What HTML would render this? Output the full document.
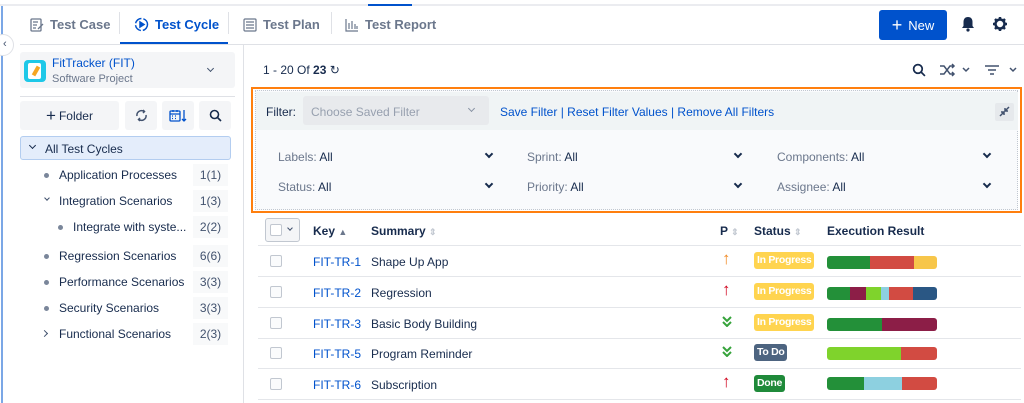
<!DOCTYPE html>
<html><head><meta charset="utf-8"><style>
*{box-sizing:border-box;margin:0;padding:0}
body{width:1024px;height:403px;overflow:hidden;background:#fff;font-family:"Liberation Sans",sans-serif;font-size:12px;color:#172b4d;position:relative}
.a{position:absolute}
.tab{position:absolute;top:17px;font-size:13px;font-weight:bold;color:#6b778c;display:flex;align-items:center;gap:6px}
.sep{position:absolute;top:12px;width:1px;height:22px;background:#dfe1e6}
.btn{position:absolute;top:101px;height:29px;background:#f4f5f7;border-radius:3px;display:flex;align-items:center;justify-content:center;color:#42526e}
.tr{position:absolute;left:0;width:235px;height:22px;display:flex;align-items:center;font-size:12px;color:#172b4d}
.cnt{position:absolute;left:193px;width:35px;height:22px;background:#f8f9fa;display:flex;align-items:center;justify-content:center;color:#42526e}
.dot{position:absolute;width:5px;height:5px;border-radius:50%;background:#7a869a}
.fl{position:absolute;color:#6b778c;font-size:12px}
.fl b{font-weight:normal;color:#172b4d}
.chev{position:absolute;width:6px;height:6px;border-right:2px solid #172b4d;border-bottom:2px solid #172b4d;transform:rotate(45deg)}
.row{position:absolute;left:258px;width:763px;height:31px;border-bottom:1px solid #e4e6ea}
.cb{position:absolute;left:12px;top:9px;width:12px;height:12px;border:1px solid #c1c7d0;border-radius:2px;background:#fafbfc}
.key{position:absolute;left:55px;top:9px;color:#0052cc}
.sum{position:absolute;left:113px;top:9px;color:#172b4d}
.st{position:absolute;left:496px;top:6px;height:17px;padding:0 3px;border-radius:3px;font-size:10.5px;font-weight:bold;color:#fff;line-height:17px;letter-spacing:-0.3px}
.bar{position:absolute;left:569px;top:10px;width:110px;height:13px;border-radius:3px;overflow:hidden;display:flex}
.bar i{display:block;height:100%}
.hd{position:absolute;top:224px;font-weight:bold;font-size:12px;color:#172b4d}
.ar{position:absolute;left:464px;top:3px;font-weight:bold;font-size:17px}
</style></head><body>
<div class="a" style="left:0;top:4px;width:1024px;height:2px;background:#ebecf0"></div>
<div class="a" style="left:368px;top:4px;width:44px;height:2px;background:#0052cc"></div>
<div class="a" style="left:1px;top:6px;width:2px;height:397px;background:#7ba7e6"></div>
<div class="a" style="left:-8px;top:34px;width:22px;height:22px;border-radius:50%;background:#fff;border:1px solid #dfe1e6"></div>
<div class="a" style="left:3px;top:38px;font-size:11px;color:#42526e">‹</div>

<div class="tab" style="left:30px"><svg width="14" height="14" viewBox="0 0 14 14" fill="none" stroke="#6b778c" stroke-width="1.3"><rect x="1" y="1" width="10" height="12" rx="1"/><path d="M3 4h5M3 7h4M3 10h3M8 11l5-5"/></svg>Test Case</div>
<div class="sep" style="left:119px"></div>
<div class="tab" style="left:134px;color:#0052cc"><svg width="15" height="15" viewBox="0 0 15 15" fill="none" stroke="#0052cc" stroke-width="1.5"><circle cx="7.5" cy="7.5" r="6" stroke-dasharray="8 2"/><path d="M6 5v5l4-2.5z" fill="#0052cc"/></svg>Test Cycle</div>
<div class="a" style="left:120px;top:42px;width:108px;height:3px;background:#0052cc"></div>
<div class="sep" style="left:228px"></div>
<div class="tab" style="left:243px"><svg width="14" height="14" viewBox="0 0 14 14" fill="none" stroke="#6b778c" stroke-width="1.2"><rect x="1" y="1" width="12" height="12" rx="1"/><path d="M3 4h8M3 7h8M3 10h8"/></svg>Test Plan</div>
<div class="sep" style="left:331px"></div>
<div class="tab" style="left:345px"><svg width="14" height="14" viewBox="0 0 14 14" fill="none" stroke="#6b778c" stroke-width="1.2"><path d="M1 1v12h12M4 11V5M7 11V3M10 11V6M12 11V8"/></svg>Test Report</div>
<div class="a" style="left:879px;top:10px;width:68px;height:30px;background:#0052cc;border-radius:3px;color:#fff;font-size:13px;display:flex;align-items:center;justify-content:center;gap:6px"><span style="font-size:18px;line-height:1">+</span>New</div>
<svg class="a" style="left:961px;top:16px" width="14" height="16" viewBox="0 0 14 16"><path d="M7 1c-3 0-4.5 2-4.5 5v4L1 12h12l-1.5-2V6C11.5 3 10 1 7 1z" fill="#172b4d"/><circle cx="7" cy="14" r="1.6" fill="#172b4d"/></svg>
<svg class="a" style="left:992px;top:16px" width="16" height="16" viewBox="0 0 16 16"><circle cx="8" cy="8" r="4.5" fill="none" stroke="#172b4d" stroke-width="2.5"/><path d="M8 1v3M8 12v3M1 8h3M12 8h3M3 3l2 2M11 11l2 2M13 3l-2 2M5 11l-2 2" stroke="#172b4d" stroke-width="2.5"/></svg>
<div class="a" style="left:20px;top:44px;width:1004px;height:1px;background:#dfe1e6"></div>

<div class="a" style="left:243px;top:45px;width:1px;height:358px;background:#dfe1e6"></div>
<div class="a" style="left:20px;top:52px;width:215px;height:36px;background:#f4f5f7;border-radius:3px"></div>
<div class="a" style="left:24px;top:60px;width:22px;height:22px;border-radius:4px;background:#1ec8e8"></div>
<div class="a" style="left:28px;top:63px;width:13px;height:16px;background:#fff;border-radius:2px"></div>
<div class="a" style="left:34px;top:66px;width:4px;height:10px;background:#f5a623;transform:rotate(30deg)"></div>
<div class="a" style="left:52px;top:56px;color:#0052cc;font-size:12px">FitTracker (FIT)</div>
<div class="a" style="left:52px;top:73px;color:#6b778c;font-size:11px">Software Project</div>
<div class="chev" style="left:208px;top:66px;width:5px;height:5px;border-width:1.5px;border-color:#42526e"></div>
<div class="a" style="left:20px;top:96px;width:215px;height:1px;background:#dfe1e6"></div>

<div class="btn" style="left:20px;width:99px;font-size:12px;color:#172b4d"><span style="font-size:17px;margin-right:3px">+</span>Folder</div>
<div class="btn" style="left:125px;width:32px"><svg width="13" height="13" viewBox="0 0 13 13" fill="none" stroke="#42526e" stroke-width="1.5"><path d="M2 7a4.5 4.5 0 0 1 7-4.5M11 6a4.5 4.5 0 0 1-7 4.5"/><path d="M8 1l1.5 1.5L8 4M5 9L3.5 10.5 5 12"/></svg></div>
<div class="btn" style="left:162px;width:32px"><svg width="18" height="14" viewBox="0 0 18 14" fill="none" stroke="#0052cc" stroke-width="1.3"><rect x="1" y="2" width="10" height="10" rx="1"/><path d="M1 5h10M4 1v2M8 1v2M15 1v11M13 10l2 2 2-2"/><path d="M3 7h1M6 7h1M3 9.5h1M6 9.5h1"/></svg></div>
<div class="btn" style="left:199px;width:32px"><svg width="13" height="13" viewBox="0 0 13 13" fill="none" stroke="#172b4d" stroke-width="1.6"><circle cx="5.5" cy="5.5" r="4"/><path d="M8.5 8.5l3.5 3.5"/></svg></div>

<div class="a" style="left:20px;top:136px;width:211px;height:24px;background:#e4edfb;border:1px solid #b3cdf0;border-radius:3px"></div>
<div class="chev" style="left:30px;top:143px;width:5px;height:5px;border-width:1.5px"></div>
<div class="a" style="left:45px;top:142px;font-size:12px">All Test Cycles</div>

<div class="tr" style="top:164px"><div class="dot" style="left:44px"></div><span style="position:absolute;left:59px">Application Processes</span><div class="cnt" style="top:0">1(1)</div></div>
<div class="tr" style="top:190px"><div class="chev" style="left:45px;top:6px;width:4px;height:4px;border-width:1.3px;border-color:#42526e"></div><span style="position:absolute;left:59px">Integration Scenarios</span><div class="cnt" style="top:0">1(3)</div></div>
<div class="tr" style="top:216px"><div class="dot" style="left:58px"></div><span style="position:absolute;left:73px">Integrate with syste...</span><div class="cnt" style="top:0">2(2)</div></div>
<div class="tr" style="top:245px"><div class="dot" style="left:44px"></div><span style="position:absolute;left:59px">Regression Scenarios</span><div class="cnt" style="top:0">6(6)</div></div>
<div class="tr" style="top:271px"><div class="dot" style="left:44px"></div><span style="position:absolute;left:59px">Performance Scenarios</span><div class="cnt" style="top:0">3(3)</div></div>
<div class="tr" style="top:297px"><div class="dot" style="left:44px"></div><span style="position:absolute;left:59px">Security Scenarios</span><div class="cnt" style="top:0">3(3)</div></div>
<div class="tr" style="top:323px"><div class="chev" style="left:42px;top:8px;width:5px;height:5px;border-width:1.3px;border-color:#42526e;transform:rotate(-45deg)"></div><span style="position:absolute;left:59px">Functional Scenarios</span><div class="cnt" style="top:0">2(3)</div></div>

<div class="a" style="left:263px;top:63px;font-size:12px">1 - 20 Of <b>23</b> <span style="font-size:12px">↻</span></div>
<svg class="a" style="left:912px;top:63px" width="14" height="14" viewBox="0 0 13 13" fill="none" stroke="#172b4d" stroke-width="1.6"><circle cx="5.5" cy="5.5" r="4"/><path d="M8.5 8.5l3.5 3.5"/></svg>
<svg class="a" style="left:939px;top:63px" width="32" height="14" viewBox="0 0 32 14" fill="none" stroke="#42526e" stroke-width="1.5"><path d="M1 3h4l6 8h4M1 11h4l6-8h4M13 1l2 2-2 2M13 9l2 2-2 2M24 5l3 3 3-3"/></svg>
<svg class="a" style="left:984px;top:63px" width="34" height="14" viewBox="0 0 34 14" fill="none" stroke="#42526e" stroke-width="1.5"><path d="M1 3h14M4 7h8M6 11h4M26 5l3 3 3-3"/></svg>

<div class="a" style="left:251px;top:87px;width:771px;height:126px;border:2px solid #ff7f0e"></div>
<div class="a" style="left:255px;top:90px;width:763px;height:120px;border:1px dotted #c1c7d0;background:#f9fafc"></div>
<div class="a" style="left:256px;top:92px;width:762px;height:38px;background:#f0f4f5"></div>
<div class="a" style="left:266px;top:105px;font-size:12px">Filter:</div>
<div class="a" style="left:303px;top:96px;width:186px;height:29px;background:#e8eaed;border-radius:3px;color:#97a0af;font-size:12px;padding:9px 8px">Choose Saved Filter</div>
<div class="chev" style="left:469px;top:106px;width:5px;height:5px;border-width:1.3px;border-color:#8993a4"></div>
<div class="a" style="left:500px;top:105px;color:#0052cc;font-size:12px">Save Filter <span style="color:#0052cc">|</span> Reset Filter Values <span>|</span> Remove All Filters</div>
<div class="a" style="left:995px;top:103px;width:19px;height:18px;background:#e6e9ec;border-radius:2px"></div>
<svg class="a" style="left:998px;top:105px" width="13" height="13" viewBox="0 0 13 13" stroke="#42526e" stroke-width="1.5" fill="none"><path d="M2 11l4-4M3 7h3v3M11 2L7 6M7 3v3h3"/></svg>

<div class="fl" style="left:278px;top:150px">Labels: <b>All</b></div>
<div class="fl" style="left:278px;top:180px">Status: <b>All</b></div>
<div class="fl" style="left:527px;top:150px">Sprint: <b>All</b></div>
<div class="fl" style="left:527px;top:180px">Priority: <b>All</b></div>
<div class="fl" style="left:777px;top:150px">Components: <b>All</b></div>
<div class="fl" style="left:777px;top:180px">Assignee: <b>All</b></div>
<div class="chev" style="left:486px;top:151px"></div><div class="chev" style="left:486px;top:181px"></div>
<div class="chev" style="left:735px;top:151px"></div><div class="chev" style="left:735px;top:181px"></div>
<div class="chev" style="left:984px;top:151px"></div><div class="chev" style="left:984px;top:181px"></div>

<div class="a" style="left:265px;top:218px;width:35px;height:24px;border:1px solid #c1c7d0;border-radius:3px;background:#f4f5f7"></div>
<div class="a" style="left:270px;top:224px;width:12px;height:12px;border:1px solid #c1c7d0;border-radius:2px;background:#fff"></div>
<div class="chev" style="left:288px;top:226px;width:4px;height:4px;border-width:1.3px;border-color:#42526e"></div>
<div class="hd" style="left:313px">Key <span style="color:#6b778c;font-size:9px">▲</span></div>
<div class="hd" style="left:371px">Summary <span style="color:#c1c7d0;font-size:9px">⇕</span></div>
<div class="hd" style="left:720px">P <span style="color:#c1c7d0;font-size:9px">⇕</span></div>
<div class="hd" style="left:754px">Status <span style="color:#c1c7d0;font-size:9px">⇕</span></div>
<div class="hd" style="left:827px">Execution Result</div>
<div class="a" style="left:258px;top:245px;width:763px;height:1px;background:#e4e6ea"></div>

<div class="row" style="top:246px"><div class="cb"></div><div class="key">FIT-TR-1</div><div class="sum">Shape Up App</div><div class="ar" style="color:#f08a24">↑</div><div class="st" style="background:#ffd44f">In Progress</div><div class="bar"><i style="width:43px;background:#239039"></i><i style="width:44px;background:#d24b42"></i><i style="width:23px;background:#f7c64a"></i></div></div>
<div class="row" style="top:277px"><div class="cb"></div><div class="key">FIT-TR-2</div><div class="sum">Regression</div><div class="ar" style="color:#d0021b">↑</div><div class="st" style="background:#ffd44f">In Progress</div><div class="bar"><i style="width:23px;background:#239039"></i><i style="width:16px;background:#8c1e47"></i><i style="width:15px;background:#7fd32c"></i><i style="width:8px;background:#8dd0e0"></i><i style="width:24px;background:#d24b42"></i><i style="width:24px;background:#2a5784"></i></div></div>
<div class="row" style="top:308px"><div class="cb"></div><div class="key">FIT-TR-3</div><div class="sum">Basic Body Building</div><svg class="a" style="left:464px;top:8px" width="10" height="11" viewBox="0 0 10 11" fill="none" stroke="#36a33b" stroke-width="2"><path d="M1 1l4 4 4-4M1 6l4 4 4-4"/></svg><div class="st" style="background:#ffd44f">In Progress</div><div class="bar"><i style="width:55px;background:#239039"></i><i style="width:55px;background:#8c1e47"></i></div></div>
<div class="row" style="top:338px"><div class="cb"></div><div class="key">FIT-TR-5</div><div class="sum">Program Reminder</div><svg class="a" style="left:464px;top:8px" width="10" height="11" viewBox="0 0 10 11" fill="none" stroke="#36a33b" stroke-width="2"><path d="M1 1l4 4 4-4M1 6l4 4 4-4"/></svg><div class="st" style="background:#4d6480">To Do</div><div class="bar" style="top:9px"><i style="width:74px;background:#7fd32c"></i><i style="width:36px;background:#d24b42"></i></div></div>
<div class="row" style="top:369px"><div class="cb"></div><div class="key">FIT-TR-6</div><div class="sum">Subscription</div><div class="ar" style="color:#d0021b">↑</div><div class="st" style="background:#1f8a3a">Done</div><div class="bar" style="top:8px"><i style="width:37px;background:#239039"></i><i style="width:38px;background:#8dd0e0"></i><i style="width:35px;background:#d24b42"></i></div></div>
</body></html>
